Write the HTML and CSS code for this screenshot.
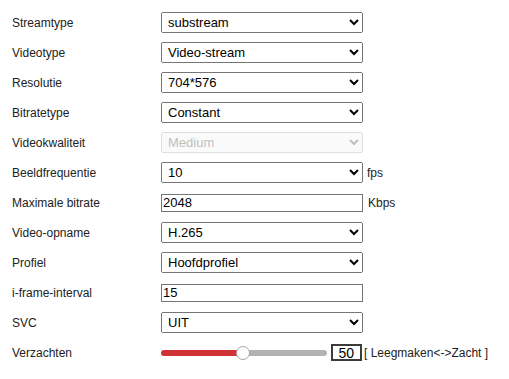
FILE: index.html
```html
<!DOCTYPE html>
<html lang="nl">
<head>
  <meta charset="UTF-8">
  <meta name="viewport" content="width=device-width, initial-scale=1.0">
  <title>Video-instellingen</title>
  <link rel="stylesheet" href="styles.css">
</head>
<body>
  <div class="settings">
    <div class="row">
      <label class="label">Streamtype</label>
      <select class="field">
        <option>substream</option>
        <option>mainstream</option>
      </select>
    </div>

    <div class="row">
      <label class="label">Videotype</label>
      <select class="field">
        <option>Video-stream</option>
      </select>
    </div>

    <div class="row">
      <label class="label">Resolutie</label>
      <select class="field">
        <option>704*576</option>
      </select>
    </div>

    <div class="row">
      <label class="label">Bitratetype</label>
      <select class="field">
        <option>Constant</option>
        <option>Variabel</option>
      </select>
    </div>

    <div class="row">
      <label class="label">Videokwaliteit</label>
      <select class="field" disabled>
        <option>Medium</option>
      </select>
    </div>

    <div class="row">
      <label class="label">Beeldfrequentie</label>
      <select class="field">
        <option>10</option>
      </select>
      <span class="unit">fps</span>
    </div>

    <div class="row">
      <label class="label">Maximale bitrate</label>
      <input class="field text" type="text" value="2048">
      <span class="unit unit-wide">Kbps</span>
    </div>

    <div class="row">
      <label class="label">Video-opname</label>
      <select class="field">
        <option>H.265</option>
        <option>H.264</option>
      </select>
    </div>

    <div class="row">
      <label class="label">Profiel</label>
      <select class="field">
        <option>Hoofdprofiel</option>
      </select>
    </div>

    <div class="row">
      <label class="label">i-frame-interval</label>
      <input class="field text" type="text" value="15">
    </div>

    <div class="row">
      <label class="label">SVC</label>
      <select class="field">
        <option>UIT</option>
        <option>AAN</option>
      </select>
    </div>

    <div class="row">
      <label class="label">Verzachten</label>
      <input class="slider" type="range" min="1" max="100" value="50">
      <input class="slider-value" type="text" value="50">
      <span class="hint">[ Leegmaken&lt;-&gt;Zacht ]</span>
    </div>
  </div>
</body>
</html>
```

FILE: styles.css
```css
* {
  margin: 0;
  padding: 0;
  box-sizing: border-box;
}

body {
  font-family: "Liberation Sans", Arial, sans-serif;
  font-size: 12px;
  color: #222;
  background-color: white;
}

.settings {
  padding: 12px 0 0 12px;
}

.row {
  display: flex;
  align-items: center;
  height: 21px;
  margin-bottom: 9px;
}

.label {
  width: 149px;
  flex-shrink: 0;
}

.field {
  width: 202px;
  height: 21px;
  font-family: "Liberation Sans", Arial, sans-serif;
  font-size: 13px;
  color: #000;
  padding-left: 2px;
}

.field:disabled {
  color: #a6a6a6;
}

.text {
  height: 18px;
  border: 1px solid #767676;
  border-radius: 0;
  padding: 0 1px;
  outline: none;
}

.unit {
  margin-left: 4px;
}

.unit-wide {
  margin-left: 5px;
}

.slider {
  -webkit-appearance: none;
  appearance: none;
  width: 166px;
  height: 6px;
  border-radius: 3px;
  background: linear-gradient(to right, #d03235 0%, #d03235 50%, #b2b2b2 50%, #b2b2b2 100%);
  outline: none;
}

.slider::-webkit-slider-thumb {
  -webkit-appearance: none;
  appearance: none;
  width: 14px;
  height: 14px;
  border-radius: 50%;
  background: white;
  border: 1px solid #a8a8a8;
  cursor: pointer;
}

.slider-value {
  width: 31px;
  height: 17px;
  margin-left: 4px;
  border: 2px solid #3c3c3c;
  font-family: "Liberation Sans", Arial, sans-serif;
  font-size: 14px;
  text-align: right;
  padding-right: 6px;
  outline: none;
}

.hint {
  margin-left: 2px;
}
```
